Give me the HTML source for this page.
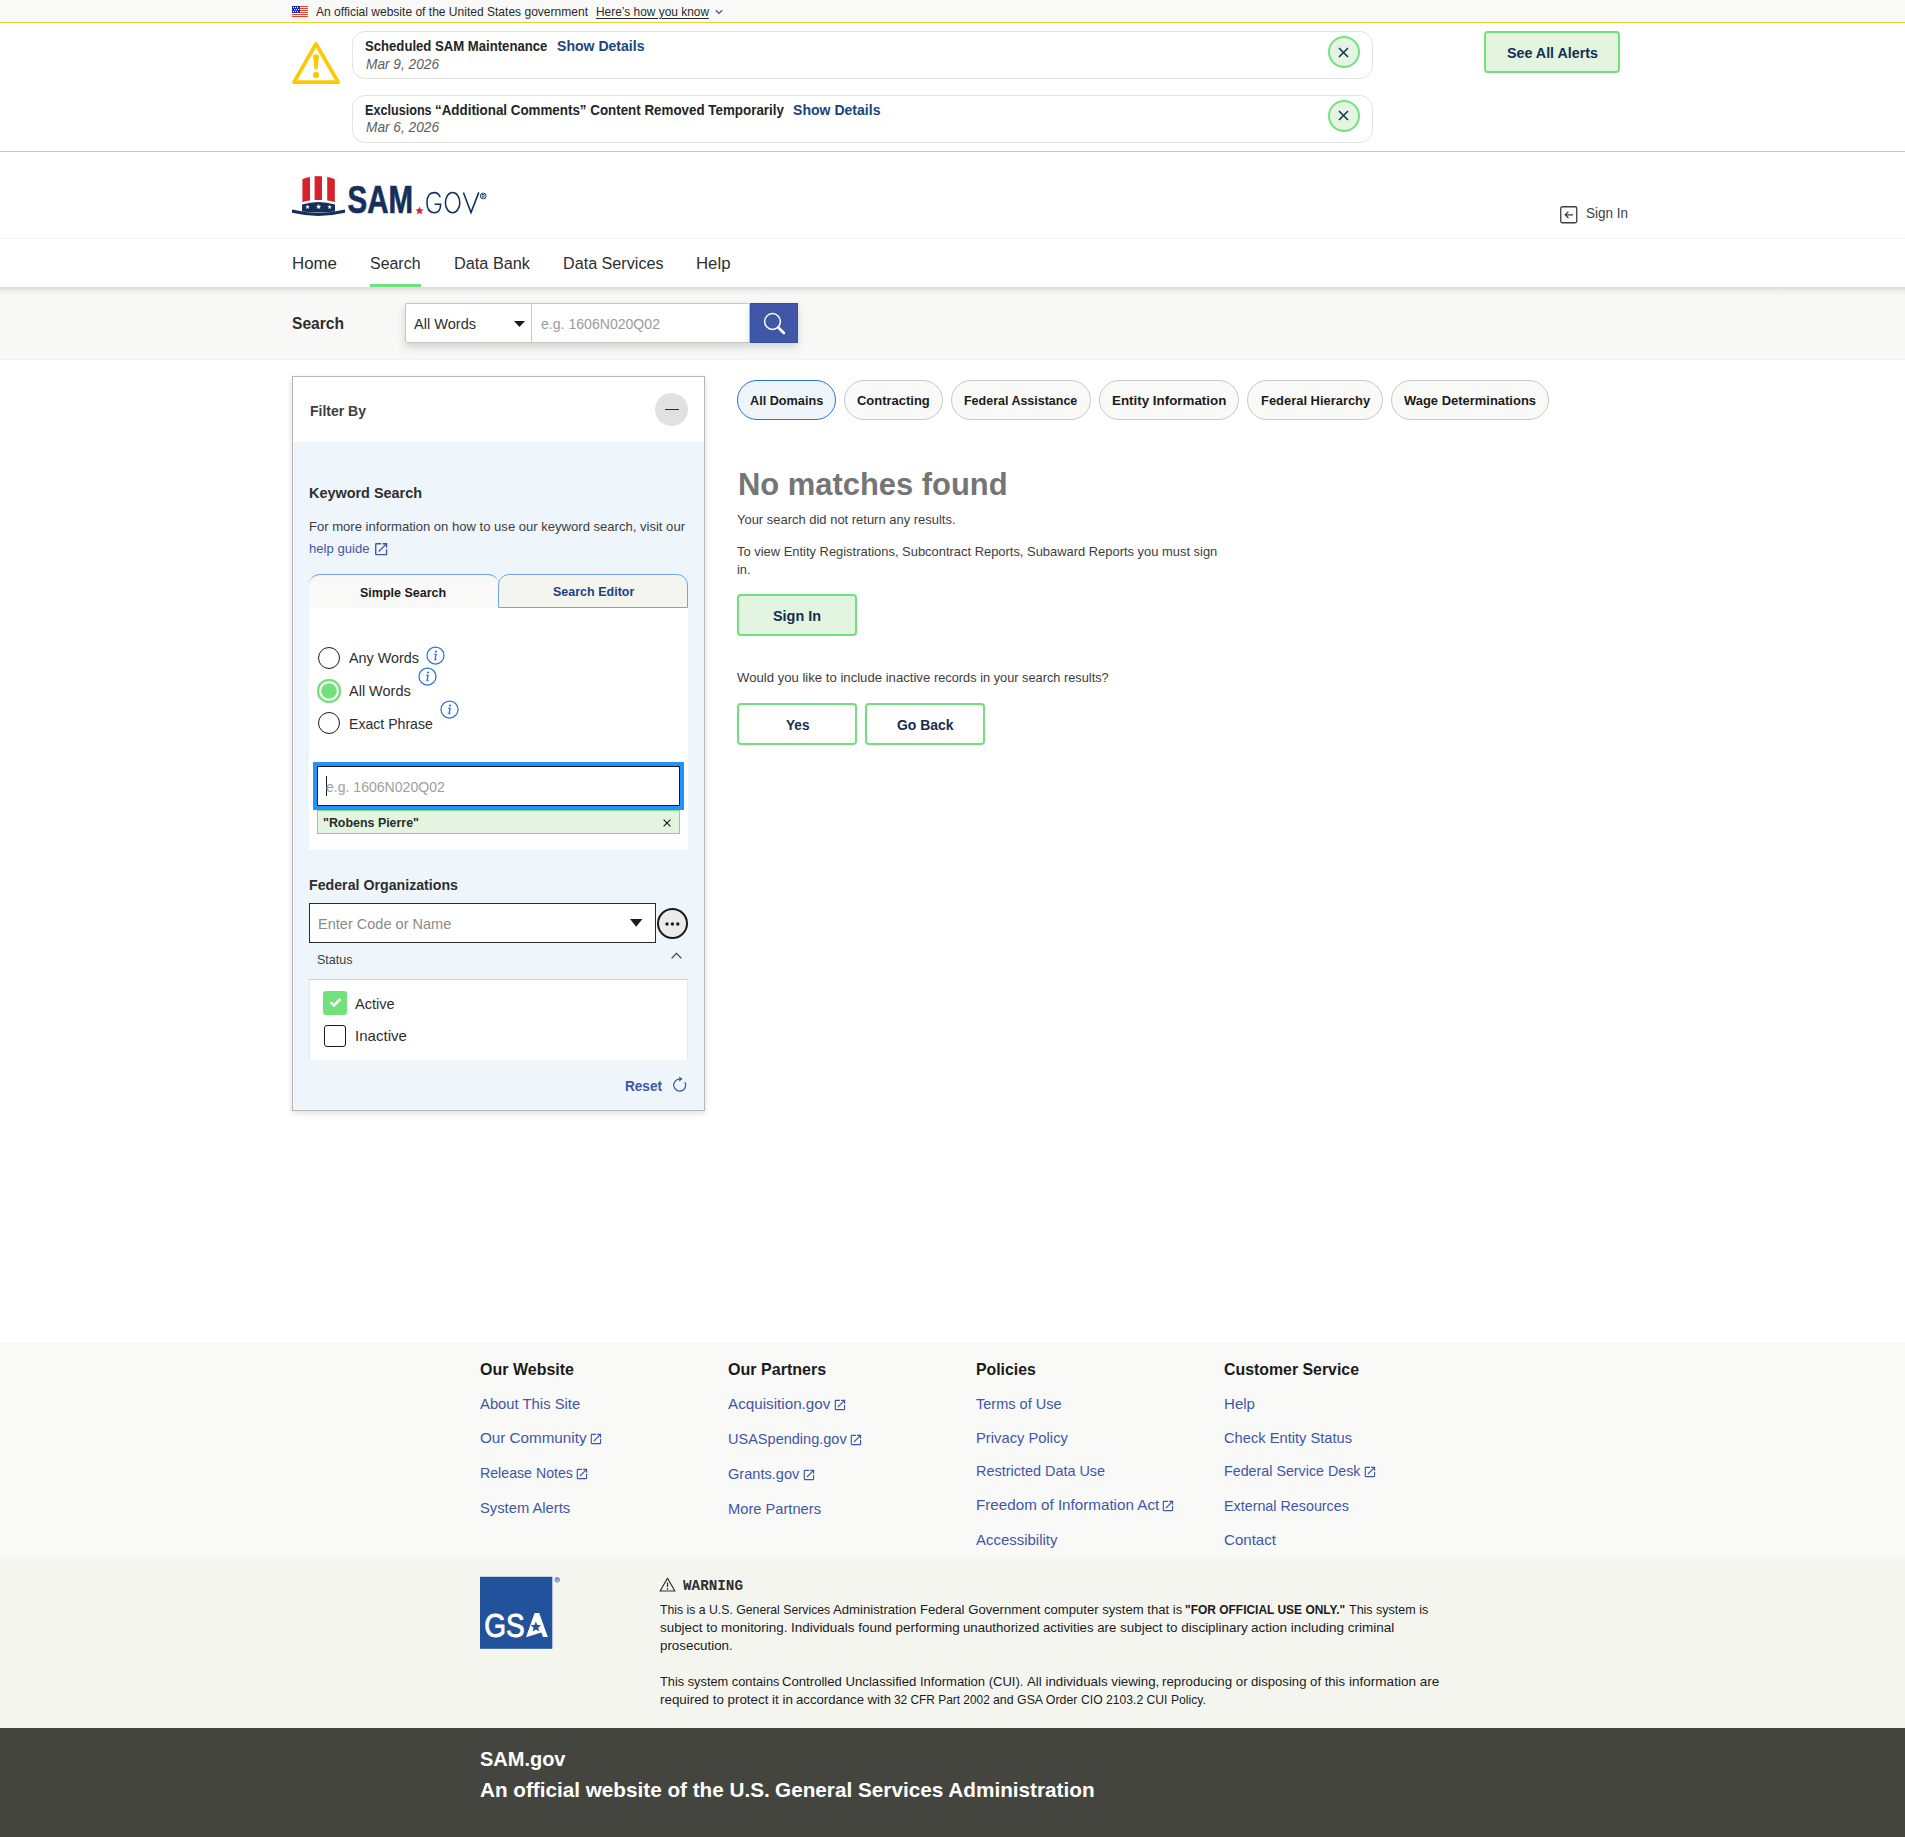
<!DOCTYPE html>
<html lang="en">
<head>
<meta charset="utf-8">
<title>SAM.gov | Search</title>
<style>
*{box-sizing:border-box;margin:0;padding:0}
html,body{width:1905px;height:1837px;overflow:hidden;background:#fff}
body{font-family:"Liberation Sans",sans-serif;color:#1b1b1b}
#page{position:relative;width:1905px;height:1837px;overflow:hidden;background:#fff}
.a{position:absolute}
.t{position:absolute;white-space:nowrap;line-height:1;display:block;transform-origin:0 50%}
svg{position:absolute;overflow:visible}
.card{position:absolute;left:352px;width:1021px;height:48px;border:1px solid #e3e3e1;border-radius:13px;background:#fff}
.xbtn{position:absolute;left:1327.6px;width:32px;height:32px;border-radius:50%;background:#e3f5e1;border:2px solid #70e17b}
.gbtn{position:absolute;background:#e3f5e1;border:2px solid #70e17b;border-radius:4px}
.wbtn{position:absolute;background:#fff;border:2px solid #70e17b;border-radius:4px}
.pill{position:absolute;top:380px;height:40px;border-radius:20px;background:#f9f9f7;border:1px solid #c9c9c9}
.radio{position:absolute;width:22px;height:22px;border-radius:50%;border:1.7px solid #1b1b1b;background:#fff}
</style>
</head>
<body>
<div id="page">
<div class="a" style="left:0;top:0;width:1905px;height:22px;background:#f9f9f7"></div>
<div class="a" style="left:0;top:22px;width:1905px;height:1px;background:#f5cd2b"></div>
<svg style="left:292px;top:6px" width="16" height="11" viewBox="0 0 16 11" shape-rendering="crispEdges">
<rect width="16" height="11" fill="#fff"/>
<g fill="#e0402e"><rect y="0" width="16" height="1"/><rect y="2" width="16" height="1"/><rect y="4" width="16" height="1"/><rect y="6" width="16" height="1"/><rect y="8" width="16" height="1"/><rect y="10" width="16" height="1"/></g>
<rect width="8" height="7" fill="#1f2fb6"/>
<g fill="#fff"><rect x="1" y="1" width="1" height="1"/><rect x="3" y="1" width="1" height="1"/><rect x="5" y="1" width="1" height="1"/><rect x="2" y="3" width="1" height="1"/><rect x="4" y="3" width="1" height="1"/><rect x="6" y="3" width="1" height="1"/><rect x="1" y="5" width="1" height="1"/><rect x="3" y="5" width="1" height="1"/><rect x="5" y="5" width="1" height="1"/></g>
</svg>
<svg style="left:715px;top:9px" width="8" height="6" viewBox="0 0 8 6"><path d="M.8 1.2 4 4.4 7.2 1.2" fill="none" stroke="#3f57a6" stroke-width="1.3"/></svg>

<div class="a" style="left:0;top:151px;width:1905px;height:1px;background:#f5cd2b"></div>
<svg style="left:291px;top:40px" width="50" height="45" viewBox="0 0 50 45">
<path d="M25 3.9 47.1 42.1 3 42.1Z" fill="none" stroke="#fcca04" stroke-width="3.8" stroke-linejoin="round"/>
<path d="M22.1 16.6Q22.1 14.2 25 14.2Q27.9 14.2 27.9 16.6L26.7 28Q26.6 29.4 25 29.4Q23.4 29.4 23.3 28Z" fill="#fcca04"/>
<circle cx="25" cy="34.9" r="3.1" fill="#fcca04"/>
</svg>
<div class="card" style="top:31px"></div>
<div class="card" style="top:94.5px"></div>
<div class="xbtn" style="top:36px"></div>
<div class="xbtn" style="top:99.6px"></div>
<svg style="left:1338px;top:46.5px" width="11" height="11" viewBox="0 0 11 11"><path d="M1 1 10 10M10 1 1 10" stroke="#162e51" stroke-width="1.5"/></svg>
<svg style="left:1338px;top:110px" width="11" height="11" viewBox="0 0 11 11"><path d="M1 1 10 10M10 1 1 10" stroke="#162e51" stroke-width="1.5"/></svg>
<div class="gbtn" style="left:1484px;top:31px;width:136px;height:42px;border-radius:4px"></div>

<svg style="left:292px;top:176px" width="196" height="40" viewBox="292 176 196 40">
<g fill="#d7222d">
<path d="M302.4 179.2 Q306 177.4 310 177 L310 200.6 Q306 201 302.4 202.2Z"/>
<path d="M314.6 176.2 L322 176.2 L322 200 L314.6 200Z"/>
<path d="M327.2 177 Q331 177.4 334.8 179.2 L334.8 202.2 Q331 201 327.2 200.6Z"/>
</g>
<path d="M302 204.5 Q318.5 199.5 335 204.5 L335 211.4 Q318.5 213.4 302 211.4Z" fill="#14305a"/>
<g fill="#fff"><path id="st" d="M307.6 204.7l.62 1.5 1.62.12-1.24 1.04.4 1.57-1.4-.86-1.4.86.4-1.57-1.24-1.04 1.62-.12z"/>
<path d="M318.6 204.1l.72 1.72 1.86.14-1.43 1.2.46 1.8-1.61-.98-1.61.98.46-1.8-1.43-1.2 1.86-.14z"/>
<path d="M329.6 204.7l.62 1.5 1.62.12-1.24 1.04.4 1.57-1.4-.86-1.4.86.4-1.57-1.24-1.04 1.62-.12z"/></g>
<path d="M292 209.6 Q318.5 216.2 345 209.6 L345 212.8 Q318.5 219 292 212.8Z" fill="#14305a"/>
<text x="347.6" y="212.9" font-family="Liberation Sans, sans-serif" font-weight="700" font-size="38.5" fill="#14305a" stroke="#14305a" stroke-width=".7" textLength="65.4" lengthAdjust="spacingAndGlyphs">SAM</text>
<path d="M419.5 206.4l1.15 2.8 3 .22-2.3 1.94.74 2.92-2.59-1.6-2.59 1.6.74-2.92-2.3-1.94 3-.22z" fill="#d7222d"/>
<g fill="none" stroke="#14305a" stroke-width="1.55">
<path d="M440.2 197.2 Q438.6 192.6 434.2 192.6 Q427 192.6 427 202.6 Q427 212.7 434.2 212.7 Q440.6 212.7 440.6 204.2 L434.6 204.2"/>
<ellipse cx="452.6" cy="202.65" rx="7.2" ry="10.05"/>
<path d="M463.4 192.4 L471 212.6 L478.8 192.4"/>
</g>
<circle cx="483.2" cy="196" r="2.9" fill="none" stroke="#14305a" stroke-width=".9"/>
<text x="481.6" y="197.7" font-family="Liberation Sans, sans-serif" font-weight="700" font-size="4.6" fill="#14305a">R</text>
</svg>
<div class="a" style="left:0;top:238px;width:1905px;height:1px;background:#f2f2ed"></div>
<svg style="left:1560px;top:205.8px" width="18" height="18" viewBox="0 0 18 18"><rect x=".75" y=".75" width="16" height="16" rx="1.5" fill="none" stroke="#3d3d3d" stroke-width="1.3"/><path d="M13 8.8H5.4M8.4 5.6 5.2 8.8 8.4 12" fill="none" stroke="#3d3d3d" stroke-width="1.3"/></svg>

<div class="a" style="left:0;top:239px;width:1905px;height:48px;background:#fff;z-index:2"></div>
<div class="a" style="left:0;top:287px;width:1905px;height:10px;background:linear-gradient(rgba(0,0,0,.12),rgba(0,0,0,.05) 35%,rgba(0,0,0,.015) 70%,rgba(0,0,0,0));z-index:2"></div>
<div class="a" style="left:370px;top:283.5px;width:51px;height:3.5px;background:#70e17b;z-index:3"></div>
<div class="a" style="left:0;top:287px;width:1905px;height:73px;background:#f8f8f6"></div>
<div class="a" style="left:0;top:359px;width:1905px;height:1px;background:#f1f1ee"></div>

<div class="a" style="left:405px;top:303px;width:345px;height:40px;background:#fff;border:1px solid #c6c6c3;border-radius:2px;box-shadow:0 4px 10px rgba(0,0,0,.16)"></div>
<div class="a" style="left:531px;top:304px;width:1px;height:38px;background:#c6c6c3"></div>
<div class="a" style="left:750px;top:303px;width:48px;height:40px;background:#3f57a6;border:1px solid #3350a2;box-shadow:0 4px 8px rgba(0,0,0,.14)"></div>
<svg style="left:513.5px;top:320.5px" width="11" height="6" viewBox="0 0 11 6"><path d="M0 0H11L5.5 6Z" fill="#1b1b1b"/></svg>
<svg style="left:760px;top:309px" width="28" height="28" viewBox="760 309 28 28"><circle cx="772.5" cy="321.5" r="7.9" fill="none" stroke="#fff" stroke-width="1.5"/><path d="M778.3 327.5 783.9 333" stroke="#fff" stroke-width="2.6" stroke-linecap="round"/></svg>

<div class="a" style="left:292px;top:376px;width:413px;height:735px;background:#eff6fb;border:1px solid #b4b6b8;box-shadow:0 2px 6px rgba(0,0,0,.14)"></div>
<div class="a" style="left:293px;top:377px;width:411px;height:65px;background:#fff"></div>
<div class="a" style="left:655px;top:393px;width:33px;height:33px;border-radius:50%;background:#e1e1e1"></div>
<div class="a" style="left:665px;top:408.5px;width:14px;height:1px;background:#162e51"></div>

<svg style="left:373px;top:540.6px" width="16.3" height="16.3" viewBox="0 0 24 24"><path fill="#3f57a6" d="M19 19H5V5h7V3H5c-1.11 0-2 .9-2 2v14c0 1.1.89 2 2 2h14c1.1 0 2-.9 2-2v-7h-2v7zM14 3v2h3.59l-9.83 9.83 1.41 1.41L19 6.41V10h2V3h-7z"/></svg>
<div class="a" style="left:309px;top:607px;width:379px;height:243px;background:#fff"></div>
<div class="a" style="left:309px;top:574px;width:190px;height:34px;background:#f9f9f7;border-top:1px solid #73a3f0;border-radius:11px 11px 0 0"></div>
<div class="a" style="left:498px;top:574px;width:190px;height:34px;background:#f5f5f0;border:1px solid #73a3f0;border-radius:11px 11px 0 0"></div>

<div class="radio" style="left:318px;top:646.7px"></div>
<div class="a" style="left:317.4px;top:679.4px;width:23.2px;height:23.2px;border-radius:50%;background:#70e17b;box-shadow:inset 0 0 0 2.2px #70e17b, inset 0 0 0 4.3px #fff"></div>
<div class="radio" style="left:318px;top:712px"></div>

<svg style="left:426.3px;top:646.4px" width="19" height="19" viewBox="0 0 19 19"><circle cx="9.5" cy="9.5" r="8.5" fill="none" stroke="#2672de" stroke-width="1.25"/><circle cx="10" cy="5.6" r="1.05" fill="#2672de"/><path d="M8.2 8.3h1.9l-1.1 5.2h1.5" fill="none" stroke="#2672de" stroke-width="1.3"/></svg><svg style="left:418.3px;top:667.4px" width="19" height="19" viewBox="0 0 19 19"><circle cx="9.5" cy="9.5" r="8.5" fill="none" stroke="#2672de" stroke-width="1.25"/><circle cx="10" cy="5.6" r="1.05" fill="#2672de"/><path d="M8.2 8.3h1.9l-1.1 5.2h1.5" fill="none" stroke="#2672de" stroke-width="1.3"/></svg><svg style="left:440.2px;top:700.4px" width="19" height="19" viewBox="0 0 19 19"><circle cx="9.5" cy="9.5" r="8.5" fill="none" stroke="#2672de" stroke-width="1.25"/><circle cx="10" cy="5.6" r="1.05" fill="#2672de"/><path d="M8.2 8.3h1.9l-1.1 5.2h1.5" fill="none" stroke="#2672de" stroke-width="1.3"/></svg>
<div class="a" style="left:313px;top:762.3px;width:371px;height:47.8px;background:#2491ff"></div>
<div class="a" style="left:317.3px;top:766.4px;width:362.6px;height:39.4px;background:#fff;border:1px solid #1b1b1b"></div>
<div class="a" style="left:326px;top:776.3px;width:1px;height:19.3px;background:#1b1b1b"></div>
<div class="a" style="left:317px;top:810px;width:363px;height:23.8px;background:#e3f5e1;border:1px solid #70e17b"></div>
<svg style="left:663px;top:819.3px" width="8" height="8" viewBox="0 0 8 8"><path d="M.6.6 7.4 7.4M7.4.6.6 7.4" stroke="#1b1b1b" stroke-width="1.15"/></svg>

<div class="a" style="left:309px;top:903px;width:347px;height:39.5px;background:#fff;border:1px solid #2b2b2b"></div>
<svg style="left:629.8px;top:919.3px" width="12.4" height="7.8" viewBox="0 0 12.4 7.8"><path d="M0 0H12.4L6.2 7.8Z" fill="#1b1b1b"/></svg>
<div class="a" style="left:656.8px;top:908.2px;width:31px;height:31px;border-radius:50%;background:#ebebeb;border:2px solid #1b1b1b"></div>
<svg style="left:664.9px;top:922.3px" width="15" height="4" viewBox="0 0 15 4"><circle cx="2" cy="2" r="1.7" fill="#1b1b1b"/><circle cx="7.4" cy="2" r="1.7" fill="#1b1b1b"/><circle cx="12.8" cy="2" r="1.7" fill="#1b1b1b"/></svg>

<svg style="left:671.4px;top:952.2px" width="11" height="7" viewBox="0 0 11 7"><path d="M.6 6.4 5.5 1.3 10.4 6.4" fill="none" stroke="#3d3d3d" stroke-width="1.2"/></svg>
<div class="a" style="left:309px;top:979.3px;width:379px;height:80.6px;background:#fff;border:1px solid #e6e8ea;border-top-color:#cfd0d1;border-bottom:0"></div>
<div class="a" style="left:323px;top:991.2px;width:24px;height:23.6px;border-radius:3px;background:#70e17b"></div>
<svg style="left:328.5px;top:996.6px" width="13" height="11" viewBox="0 0 13 11"><path d="M1.6 5.2 5 8.4 11.4 2" fill="none" stroke="#fff" stroke-width="2.6"/></svg>
<div class="a" style="left:323.8px;top:1024.8px;width:22.4px;height:22px;border-radius:3px;background:#fff;border:1.6px solid #1b1b1b"></div>
<svg style="left:672px;top:1075.5px" width="16" height="17" viewBox="0 0 16 17"><path d="M12.9 6A6 6 0 1 1 7.4 3.1" fill="none" stroke="#3f57a6" stroke-width="1.2"/><path d="M7.2.4 10.6 3.1 7.2 5.6Z" fill="#3f57a6"/></svg>

<div class="pill" style="left:737.2px;width:98.4px;background:#eff6fb;border-color:#2672de;"></div>
<div class="pill" style="left:844.2px;width:98.4px;"></div>
<div class="pill" style="left:951.2px;width:139.5px;"></div>
<div class="pill" style="left:1099.2px;width:139.5px;"></div>
<div class="pill" style="left:1247.3px;width:135.5px;"></div>
<div class="pill" style="left:1391.3px;width:157.6px;"></div>
<div class="gbtn" style="left:737px;top:594px;width:120px;height:42px"></div>
<div class="wbtn" style="left:737px;top:703px;width:120px;height:42px"></div>
<div class="wbtn" style="left:865px;top:703px;width:120px;height:42px"></div>

<div class="a" style="left:0;top:1343px;width:1905px;height:214px;background:#f9f9f7"></div>
<div class="a" style="left:0;top:1557px;width:1905px;height:171px;background:#f5f5f0"></div>
<div class="a" style="left:0;top:1728px;width:1905px;height:109px;background:#454540"></div>

<svg style="left:588.5px;top:1432.0px" width="13.9" height="13.9" viewBox="0 0 24 24"><path fill="#3f57a6" d="M19 19H5V5h7V3H5c-1.11 0-2 .9-2 2v14c0 1.1.89 2 2 2h14c1.1 0 2-.9 2-2v-7h-2v7zM14 3v2h3.59l-9.83 9.83 1.41 1.41L19 6.41V10h2V3h-7z"/></svg>
<svg style="left:574.9px;top:1466.7px" width="13.9" height="13.9" viewBox="0 0 24 24"><path fill="#3f57a6" d="M19 19H5V5h7V3H5c-1.11 0-2 .9-2 2v14c0 1.1.89 2 2 2h14c1.1 0 2-.9 2-2v-7h-2v7zM14 3v2h3.59l-9.83 9.83 1.41 1.41L19 6.41V10h2V3h-7z"/></svg>
<svg style="left:832.6px;top:1397.9px" width="13.9" height="13.9" viewBox="0 0 24 24"><path fill="#3f57a6" d="M19 19H5V5h7V3H5c-1.11 0-2 .9-2 2v14c0 1.1.89 2 2 2h14c1.1 0 2-.9 2-2v-7h-2v7zM14 3v2h3.59l-9.83 9.83 1.41 1.41L19 6.41V10h2V3h-7z"/></svg>
<svg style="left:848.9px;top:1433.1px" width="13.9" height="13.9" viewBox="0 0 24 24"><path fill="#3f57a6" d="M19 19H5V5h7V3H5c-1.11 0-2 .9-2 2v14c0 1.1.89 2 2 2h14c1.1 0 2-.9 2-2v-7h-2v7zM14 3v2h3.59l-9.83 9.83 1.41 1.41L19 6.41V10h2V3h-7z"/></svg>
<svg style="left:801.6px;top:1467.7px" width="13.9" height="13.9" viewBox="0 0 24 24"><path fill="#3f57a6" d="M19 19H5V5h7V3H5c-1.11 0-2 .9-2 2v14c0 1.1.89 2 2 2h14c1.1 0 2-.9 2-2v-7h-2v7zM14 3v2h3.59l-9.83 9.83 1.41 1.41L19 6.41V10h2V3h-7z"/></svg>
<svg style="left:1161.2px;top:1499.2px" width="13.9" height="13.9" viewBox="0 0 24 24"><path fill="#3f57a6" d="M19 19H5V5h7V3H5c-1.11 0-2 .9-2 2v14c0 1.1.89 2 2 2h14c1.1 0 2-.9 2-2v-7h-2v7zM14 3v2h3.59l-9.83 9.83 1.41 1.41L19 6.41V10h2V3h-7z"/></svg>
<svg style="left:1362.8px;top:1465.1px" width="13.9" height="13.9" viewBox="0 0 24 24"><path fill="#3f57a6" d="M19 19H5V5h7V3H5c-1.11 0-2 .9-2 2v14c0 1.1.89 2 2 2h14c1.1 0 2-.9 2-2v-7h-2v7zM14 3v2h3.59l-9.83 9.83 1.41 1.41L19 6.41V10h2V3h-7z"/></svg>
<svg style="left:480px;top:1577px" width="82" height="73" viewBox="480 1577 82 73">
<rect x="480" y="1576.8" width="72.3" height="72" fill="#22529b"/>
<text x="484.2" y="1637" font-family="Liberation Sans, sans-serif" font-size="33.6" fill="#fff" stroke="#fff" stroke-width=".9" textLength="40.4" lengthAdjust="spacingAndGlyphs">GS</text>
<path d="M534.6 1613 L539.2 1613 L547.8 1637 L543 1637 L541.4 1632.6 L526 1637.2Z" fill="#fff"/>
<path d="M535.9 1621.6l1.45 3.5 3.75.27-2.88 2.42.92 3.65-3.24-1.98-3.24 1.98.92-3.65-2.88-2.42 3.75-.27z" fill="#22529b"/>
<circle cx="557.2" cy="1579.8" r="2.3" fill="none" stroke="#22529b" stroke-width=".7"/>
<text x="556" y="1581.1" font-family="Liberation Sans, sans-serif" font-weight="700" font-size="3.4" fill="#22529b">R</text>
</svg>
<svg style="left:658.8px;top:1577.3px" width="17" height="15" viewBox="0 0 17 15"><path d="M8.5 1.3 15.9 14H1.1Z" fill="none" stroke="#2e2e2e" stroke-width="1.2" stroke-linejoin="round"/><path d="M8.5 5.6v4.4" stroke="#2e2e2e" stroke-width="1.3"/><circle cx="8.5" cy="11.9" r=".8" fill="#2e2e2e"/></svg>

<span class="t" id="bn1" style="left:316px;top:5.67px;font-size:12.2px;color:#2b2b2b;transform:scaleX(0.9872);">An official website of the United States government</span>
<span class="t" id="bn2" style="left:596px;top:5.67px;font-size:12.2px;color:#2b2b2b;transform:scaleX(0.9773);text-decoration:underline;text-underline-offset:2px;">Here’s how you know</span>
<span class="t" id="al1" style="left:365.2px;top:38.30px;font-size:15px;font-weight:700;color:#242424;transform:scaleX(0.8749);">Scheduled SAM Maintenance</span>
<span class="t" id="al1s" style="left:556.5px;top:38.30px;font-size:15px;font-weight:700;color:#1a4480;transform:scaleX(0.9372);">Show Details</span>
<span class="t" id="al1d" style="left:365.5px;top:55.80px;font-size:15px;color:#5c5c5c;font-style:italic;transform:scaleX(0.9120);">Mar 9, 2026</span>
<span class="t" id="al2_0" style="left:365px;top:101.80px;font-size:15px;font-weight:700;color:#242424;transform:scaleX(0.8409);">Exclusions</span>
<span class="t" id="al2_1" style="left:435px;top:101.80px;font-size:15px;font-weight:700;color:#242424;transform:scaleX(0.8913);">“Additional Comments” Content Removed Temporarily</span>
<span class="t" id="al2s" style="left:793px;top:101.80px;font-size:15px;font-weight:700;color:#1a4480;transform:scaleX(0.9372);">Show Details</span>
<span class="t" id="al2d" style="left:365.5px;top:119.30px;font-size:15px;color:#5c5c5c;font-style:italic;transform:scaleX(0.9120);">Mar 6, 2026</span>
<span class="t" id="seeall" style="left:1507px;top:44.88px;font-size:15.5px;font-weight:700;color:#162e51;transform:scaleX(0.9211);">See All Alerts</span>
<span class="t" id="signin" style="left:1586px;top:205.30px;font-size:15px;color:#3d3d3d;transform:scaleX(0.8993);">Sign In</span>
<span class="t" id="nav0" style="left:292.4px;top:255.89px;font-size:16.9px;color:#2e2e2e;transform:scaleX(0.9986);z-index:3;">Home</span>
<span class="t" id="nav1" style="left:370.2px;top:255.89px;font-size:16.9px;color:#2e2e2e;transform:scaleX(0.9434);z-index:3;">Search</span>
<span class="t" id="nav2" style="left:454.3px;top:255.89px;font-size:16.9px;color:#2e2e2e;transform:scaleX(0.9635);z-index:3;">Data Bank</span>
<span class="t" id="nav3" style="left:563px;top:255.89px;font-size:16.9px;color:#2e2e2e;transform:scaleX(0.9559);z-index:3;">Data Services</span>
<span class="t" id="nav4" style="left:696.3px;top:255.89px;font-size:16.9px;color:#2e2e2e;transform:scaleX(0.9928);z-index:3;">Help</span>
<span class="t" id="srch" style="left:292.4px;top:315.69px;font-size:16.9px;font-weight:700;color:#2e2e2e;transform:scaleX(0.9229);">Search</span>
<span class="t" id="selw" style="left:414.2px;top:316.30px;font-size:15px;color:#2e2e2e;transform:scaleX(0.9702);">All Words</span>
<span class="t" id="srchph" style="left:540.6px;top:316.30px;font-size:15px;color:#9b9b99;transform:scaleX(0.9386);">e.g. 1606N020Q02</span>
<span class="t" id="fby" style="left:309.6px;top:402.60px;font-size:15px;font-weight:700;color:#3d3d3d;transform:scaleX(0.9331);">Filter By</span>
<span class="t" id="kws" style="left:308.8px;top:484.60px;font-size:15px;font-weight:700;color:#2e2e2e;transform:scaleX(0.9613);">Keyword Search</span>
<span class="t" id="kwp1" style="left:308.7px;top:519.91px;font-size:13.1px;color:#3d3d3d;transform:scaleX(0.9974);">For more information on how to use our keyword search, visit our</span>
<span class="t" id="kwp2" style="left:308.7px;top:541.91px;font-size:13.1px;color:#3f57a6;transform:scaleX(1.0010);">help guide</span>
<span class="t" id="tab1" style="left:360.1px;top:586.21px;font-size:13.1px;font-weight:700;transform:scaleX(0.9551);">Simple Search</span>
<span class="t" id="tab2" style="left:552.5px;top:585.21px;font-size:13.1px;font-weight:700;color:#1a4480;transform:scaleX(0.9549);">Search Editor</span>
<span class="t" id="r1" style="left:349.3px;top:650.10px;font-size:15px;color:#2e2e2e;transform:scaleX(0.9577);">Any Words</span>
<span class="t" id="r2" style="left:349.3px;top:683.00px;font-size:15px;color:#2e2e2e;transform:scaleX(0.9655);">All Words</span>
<span class="t" id="r3" style="left:349.3px;top:715.90px;font-size:15px;color:#2e2e2e;transform:scaleX(0.9393);">Exact Phrase</span>
<span class="t" id="kwph" style="left:326.4px;top:779.30px;font-size:15px;color:#9e9e9c;transform:scaleX(0.9370);">e.g. 1606N020Q02</span>
<span class="t" id="chip" style="left:323.4px;top:815.51px;font-size:13.1px;font-weight:700;color:#2b2b2b;transform:scaleX(0.9486);">"Robens Pierre"</span>
<span class="t" id="fo" style="left:308.8px;top:877.30px;font-size:15px;font-weight:700;color:#2e2e2e;transform:scaleX(0.9458);">Federal Organizations</span>
<span class="t" id="foph" style="left:318.3px;top:915.90px;font-size:15px;color:#8a8a88;transform:scaleX(0.9689);">Enter Code or Name</span>
<span class="t" id="status" style="left:316.7px;top:952.51px;font-size:13.1px;color:#3d3d3d;transform:scaleX(0.9589);">Status</span>
<span class="t" id="act" style="left:355.3px;top:996.10px;font-size:15px;color:#2e2e2e;transform:scaleX(0.9716);">Active</span>
<span class="t" id="inact" style="left:355.3px;top:1028.30px;font-size:15px;color:#2e2e2e;transform:scaleX(1.0057);">Inactive</span>
<span class="t" id="reset" style="left:625.3px;top:1078.30px;font-size:15px;font-weight:700;color:#3f57a6;transform:scaleX(0.9055);">Reset</span>
<span class="t" id="pill0" style="left:750.3px;top:393.71px;font-size:13.1px;font-weight:700;transform:scaleX(0.9673);">All Domains</span>
<span class="t" id="pill1" style="left:857.3px;top:393.71px;font-size:13.1px;font-weight:700;transform:scaleX(0.9909);">Contracting</span>
<span class="t" id="pill2" style="left:964.4px;top:393.71px;font-size:13.1px;font-weight:700;transform:scaleX(0.9531);">Federal Assistance</span>
<span class="t" id="pill3" style="left:1111.8px;top:393.71px;font-size:13.1px;font-weight:700;transform:scaleX(1.0203);">Entity Information</span>
<span class="t" id="pill4" style="left:1260.5px;top:393.71px;font-size:13.1px;font-weight:700;transform:scaleX(0.9870);">Federal Hierarchy</span>
<span class="t" id="pill5" style="left:1403.5px;top:393.71px;font-size:13.1px;font-weight:700;transform:scaleX(0.9896);">Wage Determinations</span>
<span class="t" id="nomatch" style="left:737.6px;top:469.38px;font-size:30.5px;font-weight:700;color:#757575;transform:scaleX(1.0134);">No matches found</span>
<span class="t" id="res1" style="left:737.2px;top:512.81px;font-size:13.1px;color:#3d3d3d;transform:scaleX(0.9897);">Your search did not return any results.</span>
<span class="t" id="res2" style="left:737.2px;top:544.81px;font-size:13.1px;color:#3d3d3d;transform:scaleX(0.9865);">To view Entity Registrations, Subcontract Reports, Subaward Reports you must sign</span>
<span class="t" id="res3" style="left:737.2px;top:562.81px;font-size:13.1px;color:#3d3d3d;transform:scaleX(0.9752);">in.</span>
<span class="t" id="bsign" style="left:773.2px;top:608.13px;font-size:15.2px;font-weight:700;color:#162e51;transform:scaleX(0.9481);">Sign In</span>
<span class="t" id="res4_0" style="left:737.2px;top:670.81px;font-size:13.1px;color:#3d3d3d;transform:scaleX(1.0029);">Would you like to include inactive</span>
<span class="t" id="res4_1" style="left:934px;top:670.81px;font-size:13.1px;color:#3d3d3d;transform:scaleX(0.9758);">records in your search results?</span>
<span class="t" id="byes" style="left:785.6px;top:717.13px;font-size:15.2px;font-weight:700;color:#162e51;transform:scaleX(0.8974);">Yes</span>
<span class="t" id="bback" style="left:897px;top:717.13px;font-size:15.2px;font-weight:700;color:#162e51;transform:scaleX(0.9168);">Go Back</span>
<span class="t" id="fh0" style="left:480px;top:1361.89px;font-size:16.9px;font-weight:700;transform:scaleX(0.9477);">Our Website</span>
<span class="t" id="fh1" style="left:728.2px;top:1361.89px;font-size:16.9px;font-weight:700;transform:scaleX(0.9509);">Our Partners</span>
<span class="t" id="fh2" style="left:976px;top:1361.89px;font-size:16.9px;font-weight:700;transform:scaleX(0.9367);">Policies</span>
<span class="t" id="fh3" style="left:1224.3px;top:1361.89px;font-size:16.9px;font-weight:700;transform:scaleX(0.9398);">Customer Service</span>
<span class="t" id="fl0" style="left:480px;top:1396.00px;font-size:15px;color:#3f57a6;transform:scaleX(0.9876);">About This Site</span>
<span class="t" id="fl1" style="left:480px;top:1430.10px;font-size:15px;color:#3f57a6;transform:scaleX(1.0140);">Our Community</span>
<span class="t" id="fl2" style="left:480px;top:1464.80px;font-size:15px;color:#3f57a6;transform:scaleX(0.9442);">Release Notes</span>
<span class="t" id="fl3" style="left:480px;top:1500.00px;font-size:15px;color:#3f57a6;transform:scaleX(0.9836);">System Alerts</span>
<span class="t" id="fl4" style="left:728.2px;top:1396.00px;font-size:15px;color:#3f57a6;transform:scaleX(1.0148);">Acquisition.gov</span>
<span class="t" id="fl5" style="left:728.2px;top:1431.20px;font-size:15px;color:#3f57a6;transform:scaleX(0.9682);">USASpending.gov</span>
<span class="t" id="fl6" style="left:728.2px;top:1465.80px;font-size:15px;color:#3f57a6;transform:scaleX(0.9731);">Grants.gov</span>
<span class="t" id="fl7" style="left:728.2px;top:1501.00px;font-size:15px;color:#3f57a6;transform:scaleX(0.9785);">More Partners</span>
<span class="t" id="fl8" style="left:976px;top:1396.00px;font-size:15px;color:#3f57a6;transform:scaleX(0.9688);">Terms of Use</span>
<span class="t" id="fl9" style="left:976px;top:1430.10px;font-size:15px;color:#3f57a6;transform:scaleX(0.9844);">Privacy Policy</span>
<span class="t" id="fl10" style="left:976px;top:1463.20px;font-size:15px;color:#3f57a6;transform:scaleX(0.9619);">Restricted Data Use</span>
<span class="t" id="fl11" style="left:976px;top:1497.30px;font-size:15px;color:#3f57a6;transform:scaleX(1.0126);">Freedom of Information Act</span>
<span class="t" id="fl12" style="left:976px;top:1532.00px;font-size:15px;color:#3f57a6;transform:scaleX(0.9965);">Accessibility</span>
<span class="t" id="fl13" style="left:1224.3px;top:1396.00px;font-size:15px;color:#3f57a6;transform:scaleX(1.0046);">Help</span>
<span class="t" id="fl14" style="left:1224.3px;top:1430.10px;font-size:15px;color:#3f57a6;transform:scaleX(0.9786);">Check Entity Status</span>
<span class="t" id="fl15" style="left:1224.3px;top:1463.20px;font-size:15px;color:#3f57a6;transform:scaleX(0.9519);">Federal Service Desk</span>
<span class="t" id="fl16" style="left:1224.3px;top:1498.40px;font-size:15px;color:#3f57a6;transform:scaleX(0.9541);">External Resources</span>
<span class="t" id="fl17" style="left:1224.3px;top:1532.00px;font-size:15px;color:#3f57a6;transform:scaleX(1.0057);">Contact</span>
<span class="t" id="warn" style="left:683.1px;top:1579.26px;font-size:15.4px;font-weight:700;color:#2e2e2e;transform:scaleX(0.9280);font-family:'Liberation Mono',monospace;">WARNING</span>
<span class="t" id="w1a_0" style="left:659.5px;top:1602.71px;font-size:13.1px;transform:scaleX(0.9356);">This is a U.S. General Services</span>
<span class="t" id="w1a_1" style="left:833.1px;top:1602.71px;font-size:13.1px;transform:scaleX(1.0039);">Administration Federal Government</span>
<span class="t" id="w1a_2" style="left:1043.6px;top:1602.71px;font-size:13.1px;transform:scaleX(0.9995);">computer system that is</span>
<span class="t" id="w1b" style="left:1185.3px;top:1602.71px;font-size:13.1px;font-weight:700;transform:scaleX(0.9134);">"FOR OFFICIAL USE ONLY."</span>
<span class="t" id="w1c" style="left:1349.3px;top:1602.71px;font-size:13.1px;transform:scaleX(0.9549);">This system is</span>
<span class="t" id="w2_0" style="left:659.5px;top:1620.71px;font-size:13.1px;transform:scaleX(1.0236);">subject to monitoring.</span>
<span class="t" id="w2_1" style="left:790.7px;top:1620.71px;font-size:13.1px;transform:scaleX(1.0261);">Individuals found performing</span>
<span class="t" id="w2_2" style="left:962.9px;top:1620.71px;font-size:13.1px;transform:scaleX(1.0077);">unauthorized activities are</span>
<span class="t" id="w2_3" style="left:1119.5px;top:1620.71px;font-size:13.1px;transform:scaleX(1.0261);">subject to disciplinary</span>
<span class="t" id="w2_4" style="left:1250.6px;top:1620.71px;font-size:13.1px;transform:scaleX(1.0301);">action including criminal</span>
<span class="t" id="w3" style="left:659.5px;top:1638.71px;font-size:13.1px;transform:scaleX(1.0190);">prosecution.</span>
<span class="t" id="w4_0" style="left:659.5px;top:1674.71px;font-size:13.1px;transform:scaleX(0.9767);">This system contains</span>
<span class="t" id="w4_1" style="left:782.3px;top:1674.71px;font-size:13.1px;transform:scaleX(1.0036);">Controlled Unclassified</span>
<span class="t" id="w4_2" style="left:920px;top:1674.71px;font-size:13.1px;transform:scaleX(0.9938);">Information (CUI).</span>
<span class="t" id="w4_3" style="left:1026.7px;top:1674.71px;font-size:13.1px;transform:scaleX(1.0155);">All individuals viewing,</span>
<span class="t" id="w4_4" style="left:1162.4px;top:1674.71px;font-size:13.1px;transform:scaleX(1.0138);">reproducing or</span>
<span class="t" id="w4_5" style="left:1251.4px;top:1674.71px;font-size:13.1px;transform:scaleX(1.0021);">disposing of this</span>
<span class="t" id="w4_6" style="left:1348.9px;top:1674.71px;font-size:13.1px;transform:scaleX(1.0338);">information are</span>
<span class="t" id="w5_0" style="left:659.5px;top:1692.71px;font-size:13.1px;transform:scaleX(1.0201);">required to protect it in</span>
<span class="t" id="w5_1" style="left:795.7px;top:1692.71px;font-size:13.1px;transform:scaleX(1.0040);">accordance with</span>
<span class="t" id="w5_2" style="left:894px;top:1692.71px;font-size:13.1px;transform:scaleX(0.9078);">32 CFR Part 2002</span>
<span class="t" id="w5_3" style="left:993.1px;top:1692.71px;font-size:13.1px;transform:scaleX(0.9427);">and GSA Order</span>
<span class="t" id="w5_4" style="left:1080.9px;top:1692.71px;font-size:13.1px;transform:scaleX(0.9286);">CIO 2103.2 CUI Policy.</span>
<span class="t" id="df1" style="left:480px;top:1748.76px;font-size:20.6px;font-weight:700;color:#fff;transform:scaleX(0.9704);">SAM.gov</span>
<span class="t" id="df2_0" style="left:480px;top:1779.76px;font-size:20.6px;font-weight:700;color:#fff;transform:scaleX(1.0047);">An official website of the U.S.</span>
<span class="t" id="df2_1" style="left:775px;top:1779.76px;font-size:20.6px;font-weight:700;color:#fff;transform:scaleX(1.0069);">General Services Administration</span>
</div>
</body>
</html>
